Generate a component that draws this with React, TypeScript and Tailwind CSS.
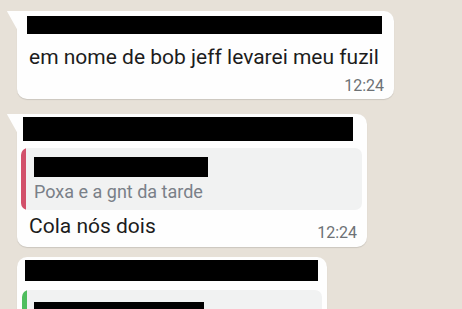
import React from "react";

const Tail = () => (
  <svg className="absolute left-[-10px] top-0" width="11" height="20" viewBox="0 0 11 20">
    <path d="M0 0 H11 V20 L1.5 3 Q0 0.5 0 0 Z" fill="#fefefe" />
  </svg>
);

export default function App() {
  return (
    <div
      className="w-[462px] h-[309px] overflow-hidden bg-[#e7e1d8] pt-[11px]"
      style={{ fontFamily: "Roboto, 'Noto Sans', sans-serif" }}
    >
      {/* Bubble 1 */}
      <div className="relative ml-[17px] w-[377px] h-[88px] bg-[#fefefe] rounded-[10px] rounded-tl-none shadow-[0_1px_1px_rgba(0,0,0,0.12)] pt-[5px] pl-[10px] pr-[10px]">
        <Tail />
        <div className="w-[355px] h-[18px] bg-black" />
        <div className="text-[21px] leading-[26px] mt-[10px] pl-[2px] text-[#1c1c1c] whitespace-nowrap">
          em nome de bob jeff levarei meu fuzil
        </div>
        <div className="flex justify-end mt-[8px]">
          <span className="text-[16px] leading-[16px] text-[#6d7175]">12:24</span>
        </div>
      </div>

      {/* Bubble 2 */}
      <div className="relative ml-[17px] mt-[15px] w-[350px] h-[133px] bg-[#fefefe] rounded-[10px] rounded-tl-none shadow-[0_1px_1px_rgba(0,0,0,0.12)] pt-[3px]">
        <Tail />
        <div className="ml-[6px] w-[330px] h-[24px] bg-black" />
        <div className="ml-[4px] mr-[5px] mt-[7px] h-[62px] bg-[#f1f2f2] rounded-[7px] flex overflow-hidden">
          <div className="w-[5px] bg-[#d2506a] rounded-l-[7px]" />
          <div className="pl-[8px] pt-[9px]">
            <div className="w-[174px] h-[20px] bg-black" />
            <div className="text-[18px] leading-[20px] mt-[5px] text-[#7a8088] whitespace-nowrap">
              Poxa e a gnt da tarde
            </div>
          </div>
        </div>
        <div className="flex items-start justify-between pl-[12px] pr-[10px] mt-[3px]">
          <span className="text-[21px] leading-[26px] text-[#1c1c1c]">Cola nós dois</span>
          <span className="text-[16px] leading-[16px] text-[#6d7175] mt-[12px]">12:24</span>
        </div>
      </div>

      {/* Bubble 3 */}
      <div className="relative ml-[17px] mt-[10px] w-[310px] h-[80px] bg-[#fefefe] rounded-[10px] shadow-[0_1px_1px_rgba(0,0,0,0.12)] pt-[3px]">
        <div className="ml-[8px] w-[293px] h-[21px] bg-black" />
        <div className="ml-[5px] mr-[5px] mt-[9px] h-[62px] bg-[#f1f2f2] rounded-[7px] flex overflow-hidden">
          <div className="w-[5px] bg-[#4fbe5e] rounded-l-[7px]" />
          <div className="pl-[7px] pt-[12px]">
            <div className="w-[170px] h-[20px] bg-black" />
          </div>
        </div>
      </div>
    </div>
  );
}
